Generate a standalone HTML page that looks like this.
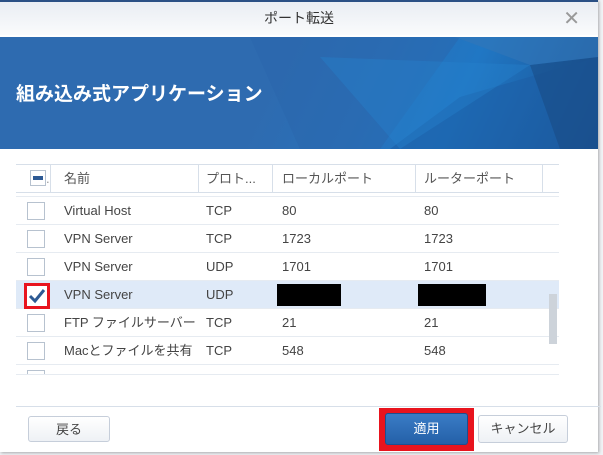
<html><head><style>
body{margin:0;width:603px;height:455px;overflow:hidden;background:#f0f2f5;font-family:"Liberation Sans","Noto Sans CJK JP",sans-serif;position:relative}
.dlg{position:absolute;left:0;top:0;width:598px;height:450px;background:#fff;border-top:2px solid #2a5085;box-shadow:1px 1px 3px rgba(0,0,0,.3)}
.tb{height:33px;background:linear-gradient(#e9edf3,#fafbfc);text-align:center;line-height:33px;font-size:14px;color:#333}
.x{position:absolute;right:18px;top:4px;color:#999;font-size:20px}
.ban{position:absolute;top:35px;left:0;width:598px;height:112px;background:linear-gradient(115deg,#2e6bb0 0%,#2e6bb0 45%,#2a70b8 60%,#2077c4 75%,#1b4f8f 100%);overflow:hidden}
.ban h1{position:absolute;left:16px;top:42px;margin:0;font-size:19px;color:#fff;font-weight:bold}
.grid{position:absolute;left:16px;top:162px;width:543px}
.hd{height:27px;border-top:1px solid #d7dfe9;border-bottom:1px solid #d7dfe9;position:relative;font-size:13px;color:#555}
.c{position:absolute;top:0;line-height:27px;white-space:nowrap}
.row{height:28px;border-bottom:1px solid #e6ebf1;position:relative;font-size:13px;color:#444;box-sizing:border-box}
.row .c{line-height:28px}
.cb{position:absolute;left:11px;top:5px;width:16px;height:16px;border:1px solid #b7c2cf;background:#fff}
.sep{position:absolute;top:0;height:27px;border-left:1px solid #d7dfe9}
.btn{position:absolute;top:414px;height:26px;border:1px solid #c6ceda;border-radius:3px;background:linear-gradient(#fff,#eef1f5);font-size:13px;color:#444;text-align:center;line-height:26px;box-sizing:border-box}
</style></head><body>
<div class="dlg">
<div class="tb">ポート転送</div><div class="x">✕</div>
<div class="ban">
<svg width="598" height="112" style="position:absolute;left:0;top:0">
<polygon points="250,0 460,0 380,112 300,112" fill="#2a66ab" opacity=".5"/>
<polygon points="460,60 598,20 598,112 390,112" fill="#1d5fa6" opacity=".6"/>
<polygon points="530,28 598,20 598,112 560,112" fill="#18477f" opacity=".5"/>
<polygon points="320,20 530,28 400,112" fill="#2681cc" opacity=".4"/>
<polygon points="455,0 598,0 598,20 530,28" fill="#3476b8" opacity=".6"/>
</svg>
<h1>組み込み式アプリケーション</h1></div>
<div class="grid">
<div class="hd"><div class="cb" style="top:5px;left:14px;width:14px;height:14px"><div style="margin:5px 2px;height:4px;background:#2d5a94"></div></div>
<span class="c" style="left:30px;color:#999">.</span><span class="sep" style="left:34px"></span>
<span class="c" style="left:48px">名前</span><span class="sep" style="left:182px"></span>
<span class="c" style="left:190px">プロト...</span><span class="sep" style="left:256px"></span>
<span class="c" style="left:266px">ローカルポート</span><span class="sep" style="left:399px"></span>
<span class="c" style="left:408px">ルーターポート</span><span class="sep" style="left:526px"></span></div>
<div style="height:3px;border-bottom:1px solid #e6ebf1"></div>
<div style="height:181px;overflow:hidden;position:relative">
<div class="row"><div class="cb"></div><span class="c" style="left:48px">Virtual Host</span><span class="c" style="left:190px">TCP</span><span class="c" style="left:266px">80</span><span class="c" style="left:408px">80</span></div>
<div class="row"><div class="cb"></div><span class="c" style="left:48px">VPN Server</span><span class="c" style="left:190px">TCP</span><span class="c" style="left:266px">1723</span><span class="c" style="left:408px">1723</span></div>
<div class="row"><div class="cb"></div><span class="c" style="left:48px">VPN Server</span><span class="c" style="left:190px">UDP</span><span class="c" style="left:266px">1701</span><span class="c" style="left:408px">1701</span></div>
<div class="row" style="background:#dfeaf8"><div class="cb" style="left:8px;top:2px;width:20px;height:20px;border:3px solid #e8141e;background:#fff"><svg width="20" height="20"><path d="M3 10 L8 15 L17 4" stroke="#2d5a94" stroke-width="3" fill="none"/></svg></div><span class="c" style="left:48px">VPN Server</span><span class="c" style="left:190px">UDP</span><div style="position:absolute;left:261px;top:3px;width:64px;height:22px;background:#000"></div><div style="position:absolute;left:402px;top:3px;width:68px;height:22px;background:#000"></div></div>
<div class="row"><div class="cb"></div><span class="c" style="left:48px">FTP ファイルサーバー</span><span class="c" style="left:190px">TCP</span><span class="c" style="left:266px">21</span><span class="c" style="left:408px">21</span></div>
<div class="row"><div class="cb"></div><span class="c" style="left:48px">Macとファイルを共有</span><span class="c" style="left:190px">TCP</span><span class="c" style="left:266px">548</span><span class="c" style="left:408px">548</span></div>
<div class="row" style="height:10px;overflow:hidden"><div class="cb"></div></div>
<div style="position:absolute;left:533px;top:97px;width:8px;height:50px;background:#cdd3da"></div>
</div></div>
<div style="position:absolute;left:16px;top:404px;width:585px;border-top:1px solid #d7dfe9"></div>
<div class="btn" style="left:28px;width:82px">戻る</div>
<div style="position:absolute;left:379px;top:406px;width:95px;height:43px;background:#e8141e"></div>
<div class="btn" style="left:385px;top:411px;width:83px;height:32px;line-height:30px;border-color:#1d4f8f;background:linear-gradient(#3a7cc6,#2460a8);color:#fff">適用</div>
<div class="btn" style="left:478px;top:413px;width:90px;height:28px">キャンセル</div>
</div>
</body></html>
